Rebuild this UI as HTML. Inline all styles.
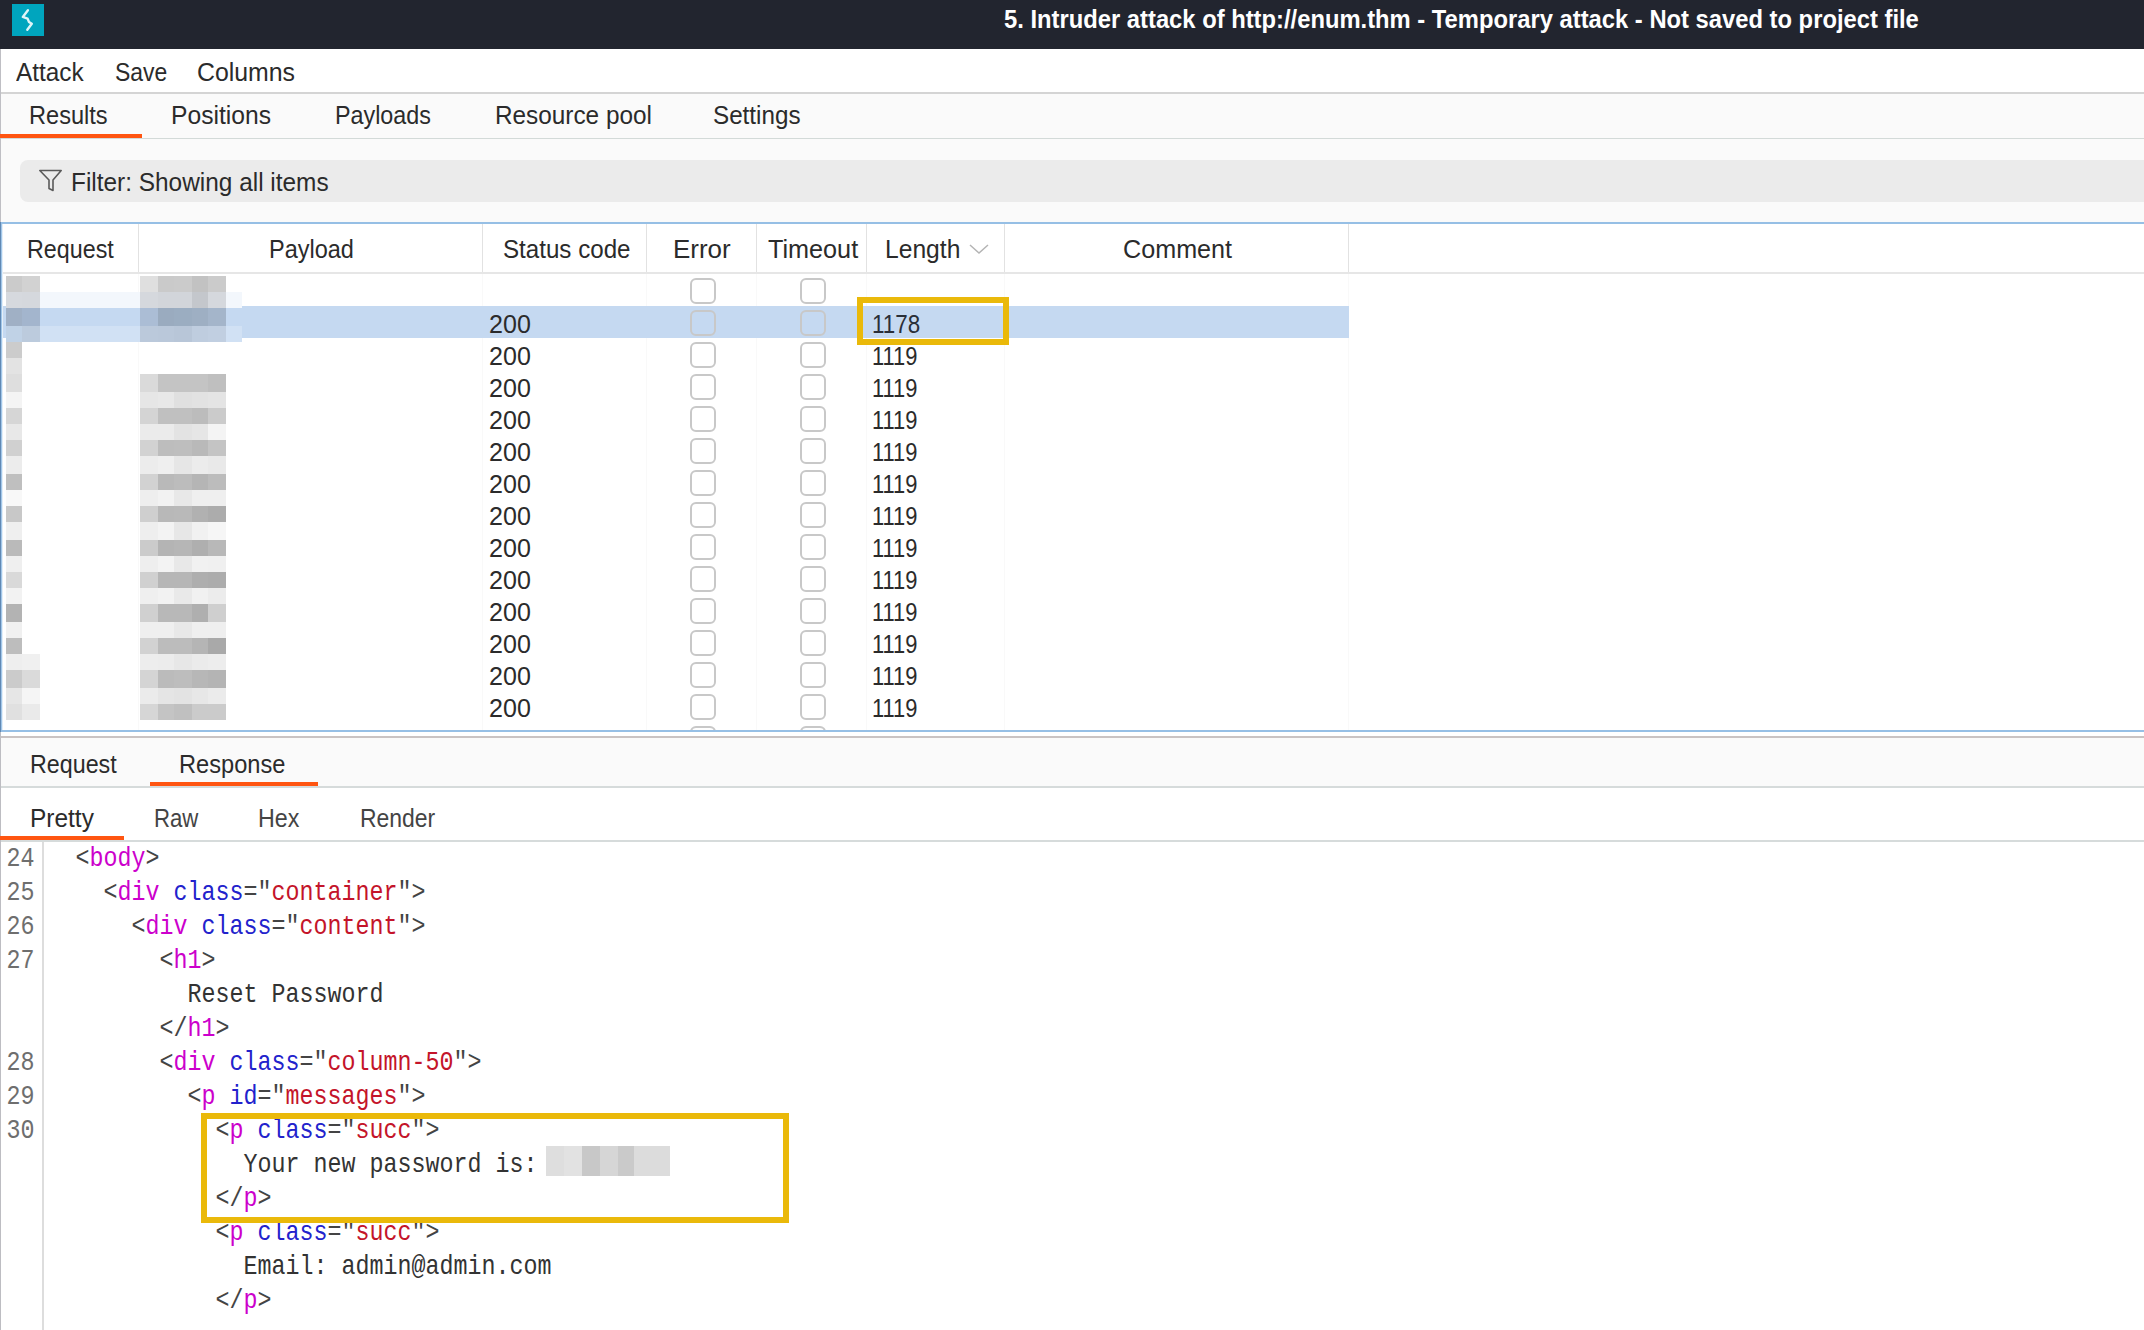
<!DOCTYPE html>
<html><head><meta charset="utf-8"><title>Burp Intruder</title><style>*{margin:0;padding:0;box-sizing:content-box}
html,body{width:2144px;height:1330px;overflow:hidden;background:#fff}
body>div,body>svg{position:absolute}
.t{position:absolute;white-space:pre;line-height:1;font-family:"Liberation Sans", sans-serif}
.m{position:absolute;white-space:pre;line-height:1;font-family:"Liberation Mono", monospace;font-size:23.33px}
</style></head><body>
<div style="left:0px;top:0px;width:2144px;height:49px;background:#22252f;"></div>
<div style="left:12px;top:4px;width:32px;height:32px;background:#00a5be;"></div>
<svg style="position:absolute;left:12px;top:4px" width="32" height="32" viewBox="0 0 32 32"><path d="M15.9 6.3 L10.8 12.9 L15.6 14.6 L17.0 18.0 L19.8 19.8 L15.3 25.8" stroke="#dff5f8" stroke-width="2.4" fill="none" stroke-linecap="round" stroke-linejoin="round"/></svg>
<div class="t" style="left:1003.9px;top:6.2px;font-size:26px;color:#ffffff;font-weight:bold;transform:scaleX(0.9142);transform-origin:0 22.0px">5. Intruder attack of http://enum.thm - Temporary attack - Not saved to project file</div>
<div style="left:0px;top:49px;width:1px;height:173px;background:#bfbfc4;"></div>
<div style="left:0px;top:732px;width:1px;height:598px;background:#bdbdc2;"></div>
<div style="left:1px;top:49px;width:2143px;height:43px;background:#ffffff;"></div>
<div class="t" style="left:16.4px;top:59.6px;font-size:25px;color:#2b2b2b;font-weight:normal;transform:scaleX(0.9741);transform-origin:0 21.2px">Attack</div>
<div class="t" style="left:114.9px;top:59.6px;font-size:25px;color:#2b2b2b;font-weight:normal;transform:scaleX(0.9169);transform-origin:0 21.2px">Save</div>
<div class="t" style="left:197.4px;top:59.6px;font-size:25px;color:#2b2b2b;font-weight:normal;transform:scaleX(0.9938);transform-origin:0 21.2px">Columns</div>
<div style="left:1px;top:92px;width:2143px;height:2px;background:#d4d4d4;"></div>
<div style="left:1px;top:94px;width:2143px;height:44px;background:#fafafa;"></div>
<div class="t" style="left:28.9px;top:102.9px;font-size:25px;color:#2b2b2b;font-weight:normal;transform:scaleX(0.9429);transform-origin:0 21.2px">Results</div>
<div class="t" style="left:171.4px;top:102.9px;font-size:25px;color:#2b2b2b;font-weight:normal;transform:scaleX(0.9858);transform-origin:0 21.2px">Positions</div>
<div class="t" style="left:335.3px;top:102.9px;font-size:25px;color:#2b2b2b;font-weight:normal;transform:scaleX(0.9330);transform-origin:0 21.2px">Payloads</div>
<div class="t" style="left:495.1px;top:102.9px;font-size:25px;color:#2b2b2b;font-weight:normal;transform:scaleX(0.9733);transform-origin:0 21.2px">Resource pool</div>
<div class="t" style="left:713.4px;top:102.9px;font-size:25px;color:#2b2b2b;font-weight:normal;transform:scaleX(0.9688);transform-origin:0 21.2px">Settings</div>
<div style="left:0px;top:134px;width:142px;height:4px;background:#ff5511;"></div>
<div style="left:1px;top:138px;width:2143px;height:1px;background:#d3dad8;"></div>
<div style="left:1px;top:139px;width:2143px;height:83px;background:#fafafa;"></div>
<div style="left:20px;top:160px;width:2200px;height:42px;background:#ebebeb;border-radius:8px"></div>
<svg style="position:absolute;left:38px;top:169px" width="26" height="24" viewBox="0 0 26 24"><path d="M1.8 1.5 H23.2 L15 11 V21.5 L11 19.5 V11 Z" stroke="#5a5a5a" stroke-width="1.6" fill="none" stroke-linejoin="round"/></svg>
<div class="t" style="left:71.3px;top:169.8px;font-size:25px;color:#2b2b2b;font-weight:normal;transform:scaleX(0.9759);transform-origin:0 21.2px">Filter: Showing all items</div>
<div style="left:1px;top:222px;width:2143px;height:510px;background:#ffffff;"></div>
<div style="left:1px;top:222px;width:2143px;height:2px;background:#96bfe5;"></div>
<div style="left:0px;top:222px;width:1px;height:510px;background:#6189b4;"></div>
<div style="left:1px;top:224px;width:1px;height:506px;background:#a0c6e9;"></div>
<div style="left:2px;top:224px;width:1px;height:506px;background:#e4eef8;"></div>
<div style="left:1px;top:730px;width:2143px;height:2px;background:#96bfe5;"></div>
<div style="left:3px;top:272px;width:2141px;height:2px;background:#e6e6e6;"></div>
<div style="left:138px;top:224px;width:1px;height:48px;background:#e2e2e2;"></div>
<div style="left:138px;top:274px;width:1px;height:456px;background:#f9f9f9;"></div>
<div style="left:482px;top:224px;width:1px;height:48px;background:#e2e2e2;"></div>
<div style="left:482px;top:274px;width:1px;height:456px;background:#f9f9f9;"></div>
<div style="left:646px;top:224px;width:1px;height:48px;background:#e2e2e2;"></div>
<div style="left:646px;top:274px;width:1px;height:456px;background:#f9f9f9;"></div>
<div style="left:756px;top:224px;width:1px;height:48px;background:#e2e2e2;"></div>
<div style="left:756px;top:274px;width:1px;height:456px;background:#f9f9f9;"></div>
<div style="left:866px;top:224px;width:1px;height:48px;background:#e2e2e2;"></div>
<div style="left:866px;top:274px;width:1px;height:456px;background:#f9f9f9;"></div>
<div style="left:1004px;top:224px;width:1px;height:48px;background:#e2e2e2;"></div>
<div style="left:1004px;top:274px;width:1px;height:456px;background:#f9f9f9;"></div>
<div style="left:1348px;top:224px;width:1px;height:48px;background:#e2e2e2;"></div>
<div style="left:1348px;top:274px;width:1px;height:456px;background:#f9f9f9;"></div>
<div style="left:3px;top:306px;width:1346px;height:32px;background:#c5d9f1;"></div>
<div class="t" style="left:27.3px;top:237.1px;font-size:25px;color:#2b2b2b;font-weight:normal;transform:scaleX(0.9319);transform-origin:0 21.2px">Request</div>
<div class="t" style="left:269.1px;top:237.1px;font-size:25px;color:#2b2b2b;font-weight:normal;transform:scaleX(0.9395);transform-origin:0 21.2px">Payload</div>
<div class="t" style="left:503.1px;top:237.1px;font-size:25px;color:#2b2b2b;font-weight:normal;transform:scaleX(0.9657);transform-origin:0 21.2px">Status code</div>
<div class="t" style="left:673.3px;top:237.1px;font-size:25px;color:#2b2b2b;font-weight:normal;transform:scaleX(1.0385);transform-origin:0 21.2px">Error</div>
<div class="t" style="left:768.0px;top:237.1px;font-size:25px;color:#2b2b2b;font-weight:normal;transform:scaleX(1.0085);transform-origin:0 21.2px">Timeout</div>
<div class="t" style="left:885.3px;top:237.1px;font-size:25px;color:#2b2b2b;font-weight:normal;transform:scaleX(0.9856);transform-origin:0 21.2px">Length</div>
<div class="t" style="left:1123.3px;top:237.1px;font-size:25px;color:#2b2b2b;font-weight:normal;transform:scaleX(1.0065);transform-origin:0 21.2px">Comment</div>
<svg style="position:absolute;left:968px;top:242px" width="22" height="14" viewBox="0 0 22 14"><path d="M2 3 L11 11 L20 3" stroke="#b4b4b4" stroke-width="1.5" fill="none"/></svg>
<div style="left:690px;top:278px;width:26px;height:26px;overflow:hidden"><div style="position:absolute;left:0;top:0;width:22px;height:22px;border:2px solid #c8c8c8;border-radius:6px"></div></div>
<div style="left:800px;top:278px;width:26px;height:26px;overflow:hidden"><div style="position:absolute;left:0;top:0;width:22px;height:22px;border:2px solid #c8c8c8;border-radius:6px"></div></div>
<div style="left:690px;top:310px;width:26px;height:26px;overflow:hidden"><div style="position:absolute;left:0;top:0;width:22px;height:22px;border:2px solid #c8c8c8;border-radius:6px"></div></div>
<div style="left:800px;top:310px;width:26px;height:26px;overflow:hidden"><div style="position:absolute;left:0;top:0;width:22px;height:22px;border:2px solid #c8c8c8;border-radius:6px"></div></div>
<div class="t" style="left:488.5px;top:311.6px;font-size:25px;color:#2b2b2b;font-weight:normal;transform:scaleX(1.0025);transform-origin:0 21.2px">200</div>
<div class="t" style="left:871.9px;top:311.6px;font-size:25px;color:#2a2f38;font-weight:normal;transform:scaleX(0.8966);transform-origin:0 21.2px">1178</div>
<div style="left:690px;top:342px;width:26px;height:26px;overflow:hidden"><div style="position:absolute;left:0;top:0;width:22px;height:22px;border:2px solid #c8c8c8;border-radius:6px"></div></div>
<div style="left:800px;top:342px;width:26px;height:26px;overflow:hidden"><div style="position:absolute;left:0;top:0;width:22px;height:22px;border:2px solid #c8c8c8;border-radius:6px"></div></div>
<div class="t" style="left:488.5px;top:343.6px;font-size:25px;color:#2b2b2b;font-weight:normal;transform:scaleX(1.0025);transform-origin:0 21.2px">200</div>
<div class="t" style="left:872.2px;top:343.6px;font-size:25px;color:#2b2b2b;font-weight:normal;transform:scaleX(0.8759);transform-origin:0 21.2px">1119</div>
<div style="left:690px;top:374px;width:26px;height:26px;overflow:hidden"><div style="position:absolute;left:0;top:0;width:22px;height:22px;border:2px solid #c8c8c8;border-radius:6px"></div></div>
<div style="left:800px;top:374px;width:26px;height:26px;overflow:hidden"><div style="position:absolute;left:0;top:0;width:22px;height:22px;border:2px solid #c8c8c8;border-radius:6px"></div></div>
<div class="t" style="left:488.5px;top:375.6px;font-size:25px;color:#2b2b2b;font-weight:normal;transform:scaleX(1.0025);transform-origin:0 21.2px">200</div>
<div class="t" style="left:872.2px;top:375.6px;font-size:25px;color:#2b2b2b;font-weight:normal;transform:scaleX(0.8759);transform-origin:0 21.2px">1119</div>
<div style="left:690px;top:406px;width:26px;height:26px;overflow:hidden"><div style="position:absolute;left:0;top:0;width:22px;height:22px;border:2px solid #c8c8c8;border-radius:6px"></div></div>
<div style="left:800px;top:406px;width:26px;height:26px;overflow:hidden"><div style="position:absolute;left:0;top:0;width:22px;height:22px;border:2px solid #c8c8c8;border-radius:6px"></div></div>
<div class="t" style="left:488.5px;top:407.6px;font-size:25px;color:#2b2b2b;font-weight:normal;transform:scaleX(1.0025);transform-origin:0 21.2px">200</div>
<div class="t" style="left:872.2px;top:407.6px;font-size:25px;color:#2b2b2b;font-weight:normal;transform:scaleX(0.8759);transform-origin:0 21.2px">1119</div>
<div style="left:690px;top:438px;width:26px;height:26px;overflow:hidden"><div style="position:absolute;left:0;top:0;width:22px;height:22px;border:2px solid #c8c8c8;border-radius:6px"></div></div>
<div style="left:800px;top:438px;width:26px;height:26px;overflow:hidden"><div style="position:absolute;left:0;top:0;width:22px;height:22px;border:2px solid #c8c8c8;border-radius:6px"></div></div>
<div class="t" style="left:488.5px;top:439.6px;font-size:25px;color:#2b2b2b;font-weight:normal;transform:scaleX(1.0025);transform-origin:0 21.2px">200</div>
<div class="t" style="left:872.2px;top:439.6px;font-size:25px;color:#2b2b2b;font-weight:normal;transform:scaleX(0.8759);transform-origin:0 21.2px">1119</div>
<div style="left:690px;top:470px;width:26px;height:26px;overflow:hidden"><div style="position:absolute;left:0;top:0;width:22px;height:22px;border:2px solid #c8c8c8;border-radius:6px"></div></div>
<div style="left:800px;top:470px;width:26px;height:26px;overflow:hidden"><div style="position:absolute;left:0;top:0;width:22px;height:22px;border:2px solid #c8c8c8;border-radius:6px"></div></div>
<div class="t" style="left:488.5px;top:471.6px;font-size:25px;color:#2b2b2b;font-weight:normal;transform:scaleX(1.0025);transform-origin:0 21.2px">200</div>
<div class="t" style="left:872.2px;top:471.6px;font-size:25px;color:#2b2b2b;font-weight:normal;transform:scaleX(0.8759);transform-origin:0 21.2px">1119</div>
<div style="left:690px;top:502px;width:26px;height:26px;overflow:hidden"><div style="position:absolute;left:0;top:0;width:22px;height:22px;border:2px solid #c8c8c8;border-radius:6px"></div></div>
<div style="left:800px;top:502px;width:26px;height:26px;overflow:hidden"><div style="position:absolute;left:0;top:0;width:22px;height:22px;border:2px solid #c8c8c8;border-radius:6px"></div></div>
<div class="t" style="left:488.5px;top:503.6px;font-size:25px;color:#2b2b2b;font-weight:normal;transform:scaleX(1.0025);transform-origin:0 21.2px">200</div>
<div class="t" style="left:872.2px;top:503.6px;font-size:25px;color:#2b2b2b;font-weight:normal;transform:scaleX(0.8759);transform-origin:0 21.2px">1119</div>
<div style="left:690px;top:534px;width:26px;height:26px;overflow:hidden"><div style="position:absolute;left:0;top:0;width:22px;height:22px;border:2px solid #c8c8c8;border-radius:6px"></div></div>
<div style="left:800px;top:534px;width:26px;height:26px;overflow:hidden"><div style="position:absolute;left:0;top:0;width:22px;height:22px;border:2px solid #c8c8c8;border-radius:6px"></div></div>
<div class="t" style="left:488.5px;top:535.6px;font-size:25px;color:#2b2b2b;font-weight:normal;transform:scaleX(1.0025);transform-origin:0 21.2px">200</div>
<div class="t" style="left:872.2px;top:535.6px;font-size:25px;color:#2b2b2b;font-weight:normal;transform:scaleX(0.8759);transform-origin:0 21.2px">1119</div>
<div style="left:690px;top:566px;width:26px;height:26px;overflow:hidden"><div style="position:absolute;left:0;top:0;width:22px;height:22px;border:2px solid #c8c8c8;border-radius:6px"></div></div>
<div style="left:800px;top:566px;width:26px;height:26px;overflow:hidden"><div style="position:absolute;left:0;top:0;width:22px;height:22px;border:2px solid #c8c8c8;border-radius:6px"></div></div>
<div class="t" style="left:488.5px;top:567.6px;font-size:25px;color:#2b2b2b;font-weight:normal;transform:scaleX(1.0025);transform-origin:0 21.2px">200</div>
<div class="t" style="left:872.2px;top:567.6px;font-size:25px;color:#2b2b2b;font-weight:normal;transform:scaleX(0.8759);transform-origin:0 21.2px">1119</div>
<div style="left:690px;top:598px;width:26px;height:26px;overflow:hidden"><div style="position:absolute;left:0;top:0;width:22px;height:22px;border:2px solid #c8c8c8;border-radius:6px"></div></div>
<div style="left:800px;top:598px;width:26px;height:26px;overflow:hidden"><div style="position:absolute;left:0;top:0;width:22px;height:22px;border:2px solid #c8c8c8;border-radius:6px"></div></div>
<div class="t" style="left:488.5px;top:599.6px;font-size:25px;color:#2b2b2b;font-weight:normal;transform:scaleX(1.0025);transform-origin:0 21.2px">200</div>
<div class="t" style="left:872.2px;top:599.6px;font-size:25px;color:#2b2b2b;font-weight:normal;transform:scaleX(0.8759);transform-origin:0 21.2px">1119</div>
<div style="left:690px;top:630px;width:26px;height:26px;overflow:hidden"><div style="position:absolute;left:0;top:0;width:22px;height:22px;border:2px solid #c8c8c8;border-radius:6px"></div></div>
<div style="left:800px;top:630px;width:26px;height:26px;overflow:hidden"><div style="position:absolute;left:0;top:0;width:22px;height:22px;border:2px solid #c8c8c8;border-radius:6px"></div></div>
<div class="t" style="left:488.5px;top:631.6px;font-size:25px;color:#2b2b2b;font-weight:normal;transform:scaleX(1.0025);transform-origin:0 21.2px">200</div>
<div class="t" style="left:872.2px;top:631.6px;font-size:25px;color:#2b2b2b;font-weight:normal;transform:scaleX(0.8759);transform-origin:0 21.2px">1119</div>
<div style="left:690px;top:662px;width:26px;height:26px;overflow:hidden"><div style="position:absolute;left:0;top:0;width:22px;height:22px;border:2px solid #c8c8c8;border-radius:6px"></div></div>
<div style="left:800px;top:662px;width:26px;height:26px;overflow:hidden"><div style="position:absolute;left:0;top:0;width:22px;height:22px;border:2px solid #c8c8c8;border-radius:6px"></div></div>
<div class="t" style="left:488.5px;top:663.6px;font-size:25px;color:#2b2b2b;font-weight:normal;transform:scaleX(1.0025);transform-origin:0 21.2px">200</div>
<div class="t" style="left:872.2px;top:663.6px;font-size:25px;color:#2b2b2b;font-weight:normal;transform:scaleX(0.8759);transform-origin:0 21.2px">1119</div>
<div style="left:690px;top:694px;width:26px;height:26px;overflow:hidden"><div style="position:absolute;left:0;top:0;width:22px;height:22px;border:2px solid #c8c8c8;border-radius:6px"></div></div>
<div style="left:800px;top:694px;width:26px;height:26px;overflow:hidden"><div style="position:absolute;left:0;top:0;width:22px;height:22px;border:2px solid #c8c8c8;border-radius:6px"></div></div>
<div class="t" style="left:488.5px;top:695.6px;font-size:25px;color:#2b2b2b;font-weight:normal;transform:scaleX(1.0025);transform-origin:0 21.2px">200</div>
<div class="t" style="left:872.2px;top:695.6px;font-size:25px;color:#2b2b2b;font-weight:normal;transform:scaleX(0.8759);transform-origin:0 21.2px">1119</div>
<div style="left:690px;top:726px;width:26px;height:4px;overflow:hidden"><div style="position:absolute;left:0;top:0;width:22px;height:22px;border:2px solid #c8c8c8;border-radius:6px"></div></div>
<div style="left:800px;top:726px;width:26px;height:4px;overflow:hidden"><div style="position:absolute;left:0;top:0;width:22px;height:22px;border:2px solid #c8c8c8;border-radius:6px"></div></div>
<div style="left:6px;top:276px;width:16px;height:16px;background:#cbcbcb;"></div>
<div style="left:22px;top:276px;width:18px;height:16px;background:#d2d2d2;"></div>
<div style="left:140px;top:276px;width:18px;height:16px;background:#dfdfdf;"></div>
<div style="left:158px;top:276px;width:16px;height:16px;background:#cacaca;"></div>
<div style="left:174px;top:276px;width:18px;height:16px;background:#cbcbcb;"></div>
<div style="left:192px;top:276px;width:16px;height:16px;background:#c2c2c2;"></div>
<div style="left:208px;top:276px;width:18px;height:16px;background:#cbcbcb;"></div>
<div style="left:6px;top:292px;width:16px;height:16px;background:#d6d9de;"></div>
<div style="left:22px;top:292px;width:18px;height:16px;background:#d5d8dd;"></div>
<div style="left:40px;top:292px;width:100px;height:16px;background:#f3f7fc;"></div>
<div style="left:140px;top:292px;width:18px;height:16px;background:#d5d8dd;"></div>
<div style="left:158px;top:292px;width:16px;height:16px;background:#d2d5da;"></div>
<div style="left:174px;top:292px;width:18px;height:16px;background:#d2d5da;"></div>
<div style="left:192px;top:292px;width:16px;height:16px;background:#c4c7cc;"></div>
<div style="left:208px;top:292px;width:18px;height:16px;background:#d5d8dd;"></div>
<div style="left:226px;top:292px;width:16px;height:16px;background:#f3f7fc;"></div>
<div style="left:6px;top:308px;width:16px;height:18px;background:#a0b0c5;"></div>
<div style="left:22px;top:308px;width:18px;height:18px;background:#a3b5cd;"></div>
<div style="left:40px;top:308px;width:100px;height:18px;background:#c5d9f1;"></div>
<div style="left:140px;top:308px;width:18px;height:18px;background:#abbdd5;"></div>
<div style="left:158px;top:308px;width:16px;height:18px;background:#9aabbf;"></div>
<div style="left:174px;top:308px;width:18px;height:18px;background:#9badc1;"></div>
<div style="left:192px;top:308px;width:16px;height:18px;background:#9eafc3;"></div>
<div style="left:208px;top:308px;width:18px;height:18px;background:#a4b5ca;"></div>
<div style="left:226px;top:308px;width:16px;height:18px;background:#c5d9f1;"></div>
<div style="left:6px;top:326px;width:16px;height:16px;background:#c0d2e6;"></div>
<div style="left:22px;top:326px;width:18px;height:16px;background:#bccbdd;"></div>
<div style="left:40px;top:326px;width:100px;height:16px;background:#d1e1f4;"></div>
<div style="left:140px;top:326px;width:18px;height:16px;background:#bbc9db;"></div>
<div style="left:158px;top:326px;width:16px;height:16px;background:#bac8da;"></div>
<div style="left:174px;top:326px;width:18px;height:16px;background:#b8c6d8;"></div>
<div style="left:192px;top:326px;width:16px;height:16px;background:#bfcddf;"></div>
<div style="left:208px;top:326px;width:18px;height:16px;background:#c1cfe1;"></div>
<div style="left:226px;top:326px;width:16px;height:16px;background:#d1e1f4;"></div>
<div style="left:6px;top:342px;width:16px;height:16px;background:#cccccc;"></div>
<div style="left:6px;top:358px;width:16px;height:16px;background:#e3e3e3;"></div>
<div style="left:6px;top:374px;width:16px;height:18px;background:#dedede;"></div>
<div style="left:140px;top:374px;width:18px;height:18px;background:#dadada;"></div>
<div style="left:158px;top:374px;width:16px;height:18px;background:#c4c4c4;"></div>
<div style="left:174px;top:374px;width:18px;height:18px;background:#c4c4c4;"></div>
<div style="left:192px;top:374px;width:16px;height:18px;background:#c4c4c4;"></div>
<div style="left:208px;top:374px;width:18px;height:18px;background:#bfbfbf;"></div>
<div style="left:6px;top:392px;width:16px;height:16px;background:#f4f4f4;"></div>
<div style="left:140px;top:392px;width:18px;height:16px;background:#e6e6e6;"></div>
<div style="left:158px;top:392px;width:16px;height:16px;background:#e8e8e8;"></div>
<div style="left:174px;top:392px;width:18px;height:16px;background:#e0e0e0;"></div>
<div style="left:192px;top:392px;width:16px;height:16px;background:#e2e2e2;"></div>
<div style="left:208px;top:392px;width:18px;height:16px;background:#e4e4e4;"></div>
<div style="left:6px;top:408px;width:16px;height:16px;background:#d6d6d6;"></div>
<div style="left:140px;top:408px;width:18px;height:16px;background:#d4d4d4;"></div>
<div style="left:158px;top:408px;width:16px;height:16px;background:#c0c0c0;"></div>
<div style="left:174px;top:408px;width:18px;height:16px;background:#c0c0c0;"></div>
<div style="left:192px;top:408px;width:16px;height:16px;background:#bcbcbc;"></div>
<div style="left:208px;top:408px;width:18px;height:16px;background:#cbcbcb;"></div>
<div style="left:6px;top:424px;width:16px;height:16px;background:#e8e8e8;"></div>
<div style="left:140px;top:424px;width:18px;height:16px;background:#ebebeb;"></div>
<div style="left:158px;top:424px;width:16px;height:16px;background:#ebebeb;"></div>
<div style="left:174px;top:424px;width:18px;height:16px;background:#e3e3e3;"></div>
<div style="left:192px;top:424px;width:16px;height:16px;background:#e6e6e6;"></div>
<div style="left:208px;top:424px;width:18px;height:16px;background:#f4f4f4;"></div>
<div style="left:6px;top:440px;width:16px;height:16px;background:#d0d0d0;"></div>
<div style="left:140px;top:440px;width:18px;height:16px;background:#d2d2d2;"></div>
<div style="left:158px;top:440px;width:16px;height:16px;background:#bdbdbd;"></div>
<div style="left:174px;top:440px;width:18px;height:16px;background:#bebebe;"></div>
<div style="left:192px;top:440px;width:16px;height:16px;background:#b9b9b9;"></div>
<div style="left:208px;top:440px;width:18px;height:16px;background:#c4c4c4;"></div>
<div style="left:6px;top:456px;width:16px;height:18px;background:#ececec;"></div>
<div style="left:140px;top:456px;width:18px;height:18px;background:#ececec;"></div>
<div style="left:158px;top:456px;width:16px;height:18px;background:#efefef;"></div>
<div style="left:174px;top:456px;width:18px;height:18px;background:#e6e6e6;"></div>
<div style="left:192px;top:456px;width:16px;height:18px;background:#ececec;"></div>
<div style="left:208px;top:456px;width:18px;height:18px;background:#e9e9e9;"></div>
<div style="left:6px;top:474px;width:16px;height:16px;background:#bfbfbf;"></div>
<div style="left:140px;top:474px;width:18px;height:16px;background:#d2d2d2;"></div>
<div style="left:158px;top:474px;width:16px;height:16px;background:#b9b9b9;"></div>
<div style="left:174px;top:474px;width:18px;height:16px;background:#bcbcbc;"></div>
<div style="left:192px;top:474px;width:16px;height:16px;background:#b5b5b5;"></div>
<div style="left:208px;top:474px;width:18px;height:16px;background:#bcbcbc;"></div>
<div style="left:6px;top:490px;width:16px;height:16px;background:#f8f8f8;"></div>
<div style="left:140px;top:490px;width:18px;height:16px;background:#eeeeee;"></div>
<div style="left:158px;top:490px;width:16px;height:16px;background:#f2f2f2;"></div>
<div style="left:174px;top:490px;width:18px;height:16px;background:#e8e8e8;"></div>
<div style="left:192px;top:490px;width:16px;height:16px;background:#efefef;"></div>
<div style="left:208px;top:490px;width:18px;height:16px;background:#efefef;"></div>
<div style="left:6px;top:506px;width:16px;height:16px;background:#c8c8c8;"></div>
<div style="left:140px;top:506px;width:18px;height:16px;background:#cfcfcf;"></div>
<div style="left:158px;top:506px;width:16px;height:16px;background:#b8b8b8;"></div>
<div style="left:174px;top:506px;width:18px;height:16px;background:#b9b9b9;"></div>
<div style="left:192px;top:506px;width:16px;height:16px;background:#b1b1b1;"></div>
<div style="left:208px;top:506px;width:18px;height:16px;background:#acacac;"></div>
<div style="left:6px;top:522px;width:16px;height:18px;background:#efefef;"></div>
<div style="left:140px;top:522px;width:18px;height:18px;background:#eeeeee;"></div>
<div style="left:158px;top:522px;width:16px;height:18px;background:#f3f3f3;"></div>
<div style="left:174px;top:522px;width:18px;height:18px;background:#e7e7e7;"></div>
<div style="left:192px;top:522px;width:16px;height:18px;background:#f1f1f1;"></div>
<div style="left:208px;top:522px;width:18px;height:18px;background:#f6f6f6;"></div>
<div style="left:6px;top:540px;width:16px;height:16px;background:#bababa;"></div>
<div style="left:140px;top:540px;width:18px;height:16px;background:#cbcbcb;"></div>
<div style="left:158px;top:540px;width:16px;height:16px;background:#b4b4b4;"></div>
<div style="left:174px;top:540px;width:18px;height:16px;background:#b6b6b6;"></div>
<div style="left:192px;top:540px;width:16px;height:16px;background:#afafaf;"></div>
<div style="left:208px;top:540px;width:18px;height:16px;background:#b8b8b8;"></div>
<div style="left:6px;top:556px;width:16px;height:16px;background:#efefef;"></div>
<div style="left:140px;top:556px;width:18px;height:16px;background:#eeeeee;"></div>
<div style="left:158px;top:556px;width:16px;height:16px;background:#f3f3f3;"></div>
<div style="left:174px;top:556px;width:18px;height:16px;background:#e8e8e8;"></div>
<div style="left:192px;top:556px;width:16px;height:16px;background:#f1f1f1;"></div>
<div style="left:208px;top:556px;width:18px;height:16px;background:#f0f0f0;"></div>
<div style="left:6px;top:572px;width:16px;height:16px;background:#d9d9d9;"></div>
<div style="left:140px;top:572px;width:18px;height:16px;background:#d0d0d0;"></div>
<div style="left:158px;top:572px;width:16px;height:16px;background:#b6b6b6;"></div>
<div style="left:174px;top:572px;width:18px;height:16px;background:#b6b6b6;"></div>
<div style="left:192px;top:572px;width:16px;height:16px;background:#aeaeae;"></div>
<div style="left:208px;top:572px;width:18px;height:16px;background:#acacac;"></div>
<div style="left:6px;top:588px;width:16px;height:16px;background:#f2f2f2;"></div>
<div style="left:140px;top:588px;width:18px;height:16px;background:#efefef;"></div>
<div style="left:158px;top:588px;width:16px;height:16px;background:#f2f2f2;"></div>
<div style="left:174px;top:588px;width:18px;height:16px;background:#e9e9e9;"></div>
<div style="left:192px;top:588px;width:16px;height:16px;background:#f1f1f1;"></div>
<div style="left:208px;top:588px;width:18px;height:16px;background:#ececec;"></div>
<div style="left:6px;top:604px;width:16px;height:18px;background:#b3b3b3;"></div>
<div style="left:140px;top:604px;width:18px;height:18px;background:#d0d0d0;"></div>
<div style="left:158px;top:604px;width:16px;height:18px;background:#b8b8b8;"></div>
<div style="left:174px;top:604px;width:18px;height:18px;background:#b8b8b8;"></div>
<div style="left:192px;top:604px;width:16px;height:18px;background:#afafaf;"></div>
<div style="left:208px;top:604px;width:18px;height:18px;background:#cfcfcf;"></div>
<div style="left:6px;top:622px;width:16px;height:16px;background:#f0f0f0;"></div>
<div style="left:140px;top:622px;width:18px;height:16px;background:#efefef;"></div>
<div style="left:158px;top:622px;width:16px;height:16px;background:#efefef;"></div>
<div style="left:174px;top:622px;width:18px;height:16px;background:#e8e8e8;"></div>
<div style="left:192px;top:622px;width:16px;height:16px;background:#efefef;"></div>
<div style="left:208px;top:622px;width:18px;height:16px;background:#efefef;"></div>
<div style="left:6px;top:638px;width:16px;height:16px;background:#bdbdbd;"></div>
<div style="left:140px;top:638px;width:18px;height:16px;background:#d2d2d2;"></div>
<div style="left:158px;top:638px;width:16px;height:16px;background:#bcbcbc;"></div>
<div style="left:174px;top:638px;width:18px;height:16px;background:#bcbcbc;"></div>
<div style="left:192px;top:638px;width:16px;height:16px;background:#b5b5b5;"></div>
<div style="left:208px;top:638px;width:18px;height:16px;background:#a9a9a9;"></div>
<div style="left:6px;top:654px;width:16px;height:16px;background:#eeeeee;"></div>
<div style="left:22px;top:654px;width:18px;height:16px;background:#f0f0f0;"></div>
<div style="left:140px;top:654px;width:18px;height:16px;background:#ededed;"></div>
<div style="left:158px;top:654px;width:16px;height:16px;background:#ececec;"></div>
<div style="left:174px;top:654px;width:18px;height:16px;background:#e7e7e7;"></div>
<div style="left:192px;top:654px;width:16px;height:16px;background:#ebebeb;"></div>
<div style="left:208px;top:654px;width:18px;height:16px;background:#ededed;"></div>
<div style="left:6px;top:670px;width:16px;height:18px;background:#cbcbcb;"></div>
<div style="left:22px;top:670px;width:18px;height:18px;background:#dadada;"></div>
<div style="left:140px;top:670px;width:18px;height:18px;background:#d4d4d4;"></div>
<div style="left:158px;top:670px;width:16px;height:18px;background:#bbbbbb;"></div>
<div style="left:174px;top:670px;width:18px;height:18px;background:#bdbdbd;"></div>
<div style="left:192px;top:670px;width:16px;height:18px;background:#b7b7b7;"></div>
<div style="left:208px;top:670px;width:18px;height:18px;background:#b4b4b4;"></div>
<div style="left:6px;top:688px;width:16px;height:16px;background:#e6e6e6;"></div>
<div style="left:22px;top:688px;width:18px;height:16px;background:#f5f5f5;"></div>
<div style="left:140px;top:688px;width:18px;height:16px;background:#ebebeb;"></div>
<div style="left:158px;top:688px;width:16px;height:16px;background:#e5e5e5;"></div>
<div style="left:174px;top:688px;width:18px;height:16px;background:#e3e3e3;"></div>
<div style="left:192px;top:688px;width:16px;height:16px;background:#e7e7e7;"></div>
<div style="left:208px;top:688px;width:18px;height:16px;background:#ebebeb;"></div>
<div style="left:6px;top:704px;width:16px;height:16px;background:#e0e0e0;"></div>
<div style="left:22px;top:704px;width:18px;height:16px;background:#eaeaea;"></div>
<div style="left:140px;top:704px;width:18px;height:16px;background:#d6d6d6;"></div>
<div style="left:158px;top:704px;width:16px;height:16px;background:#c4c4c4;"></div>
<div style="left:174px;top:704px;width:18px;height:16px;background:#c0c0c0;"></div>
<div style="left:192px;top:704px;width:16px;height:16px;background:#cbcbcb;"></div>
<div style="left:208px;top:704px;width:18px;height:16px;background:#cbcbcb;"></div>
<div style="left:857px;top:297px;width:140px;height:36px;border:6px solid #eab90a"></div>
<div style="left:1px;top:732px;width:2143px;height:4px;background:#ffffff;"></div>
<div style="left:1px;top:736px;width:2143px;height:2px;background:#c9c3c3;"></div>
<div style="left:1px;top:738px;width:2143px;height:48px;background:#fafafa;"></div>
<div class="t" style="left:29.6px;top:751.8px;font-size:25px;color:#2b2b2b;font-weight:normal;transform:scaleX(0.9308);transform-origin:0 21.2px">Request</div>
<div class="t" style="left:179.1px;top:751.8px;font-size:25px;color:#2b2b2b;font-weight:normal;transform:scaleX(0.9452);transform-origin:0 21.2px">Response</div>
<div style="left:150px;top:782px;width:168px;height:4px;background:#ff5511;"></div>
<div style="left:1px;top:786px;width:2143px;height:2px;background:#d6dbdb;"></div>
<div style="left:1px;top:788px;width:2143px;height:52px;background:#ffffff;"></div>
<div class="t" style="left:29.5px;top:805.6px;font-size:25px;color:#2b2b2b;font-weight:normal;transform:scaleX(0.9787);transform-origin:0 21.2px">Pretty</div>
<div class="t" style="left:153.6px;top:805.6px;font-size:25px;color:#444;font-weight:normal;transform:scaleX(0.8875);transform-origin:0 21.2px">Raw</div>
<div class="t" style="left:257.7px;top:805.6px;font-size:25px;color:#444;font-weight:normal;transform:scaleX(0.9310);transform-origin:0 21.2px">Hex</div>
<div class="t" style="left:359.5px;top:805.6px;font-size:25px;color:#444;font-weight:normal;transform:scaleX(0.9179);transform-origin:0 21.2px">Render</div>
<div style="left:0px;top:836px;width:124px;height:4px;background:#ff5511;"></div>
<div style="left:1px;top:840px;width:2143px;height:2px;background:#d6dbdb;"></div>
<div style="left:1px;top:842px;width:2143px;height:488px;background:#ffffff;"></div>
<div style="left:42px;top:842px;width:2px;height:488px;background:#dddddd;"></div>
<div class="m" style="left:75.5px;top:848.9px;transform:scaleY(1.16);transform-origin:0 17.9px"><span style="color:#444444">&lt;</span><span style="color:#cc00cc">body</span><span style="color:#444444">&gt;</span></div>
<div class="m" style="left:103.5px;top:882.9px;transform:scaleY(1.16);transform-origin:0 17.9px"><span style="color:#444444">&lt;</span><span style="color:#cc00cc">div</span><span style="color:#444444"> </span><span style="color:#2222cc">class</span><span style="color:#444444">=&quot;</span><span style="color:#c4142a">container</span><span style="color:#444444">&quot;</span><span style="color:#444444">&gt;</span></div>
<div class="m" style="left:131.5px;top:916.9px;transform:scaleY(1.16);transform-origin:0 17.9px"><span style="color:#444444">&lt;</span><span style="color:#cc00cc">div</span><span style="color:#444444"> </span><span style="color:#2222cc">class</span><span style="color:#444444">=&quot;</span><span style="color:#c4142a">content</span><span style="color:#444444">&quot;</span><span style="color:#444444">&gt;</span></div>
<div class="m" style="left:159.5px;top:950.9px;transform:scaleY(1.16);transform-origin:0 17.9px"><span style="color:#444444">&lt;</span><span style="color:#cc00cc">h1</span><span style="color:#444444">&gt;</span></div>
<div class="m" style="left:187.5px;top:984.9px;transform:scaleY(1.16);transform-origin:0 17.9px"><span style="color:#333333">Reset Password</span></div>
<div class="m" style="left:159.5px;top:1018.9px;transform:scaleY(1.16);transform-origin:0 17.9px"><span style="color:#444444">&lt;/</span><span style="color:#cc00cc">h1</span><span style="color:#444444">&gt;</span></div>
<div class="m" style="left:159.5px;top:1052.9px;transform:scaleY(1.16);transform-origin:0 17.9px"><span style="color:#444444">&lt;</span><span style="color:#cc00cc">div</span><span style="color:#444444"> </span><span style="color:#2222cc">class</span><span style="color:#444444">=&quot;</span><span style="color:#c4142a">column-50</span><span style="color:#444444">&quot;</span><span style="color:#444444">&gt;</span></div>
<div class="m" style="left:187.5px;top:1086.9px;transform:scaleY(1.16);transform-origin:0 17.9px"><span style="color:#444444">&lt;</span><span style="color:#cc00cc">p</span><span style="color:#444444"> </span><span style="color:#2222cc">id</span><span style="color:#444444">=&quot;</span><span style="color:#c4142a">messages</span><span style="color:#444444">&quot;</span><span style="color:#444444">&gt;</span></div>
<div class="m" style="left:215.5px;top:1120.9px;transform:scaleY(1.16);transform-origin:0 17.9px"><span style="color:#444444">&lt;</span><span style="color:#cc00cc">p</span><span style="color:#444444"> </span><span style="color:#2222cc">class</span><span style="color:#444444">=&quot;</span><span style="color:#c4142a">succ</span><span style="color:#444444">&quot;</span><span style="color:#444444">&gt;</span></div>
<div class="m" style="left:243.5px;top:1154.9px;transform:scaleY(1.16);transform-origin:0 17.9px"><span style="color:#333333">Your new password is:</span></div>
<div class="m" style="left:215.5px;top:1188.9px;transform:scaleY(1.16);transform-origin:0 17.9px"><span style="color:#444444">&lt;/</span><span style="color:#cc00cc">p</span><span style="color:#444444">&gt;</span></div>
<div class="m" style="left:215.5px;top:1222.9px;transform:scaleY(1.16);transform-origin:0 17.9px"><span style="color:#444444">&lt;</span><span style="color:#cc00cc">p</span><span style="color:#444444"> </span><span style="color:#2222cc">class</span><span style="color:#444444">=&quot;</span><span style="color:#c4142a">succ</span><span style="color:#444444">&quot;</span><span style="color:#444444">&gt;</span></div>
<div class="m" style="left:243.5px;top:1256.9px;transform:scaleY(1.16);transform-origin:0 17.9px"><span style="color:#333333">Email: admin@admin.com</span></div>
<div class="m" style="left:215.5px;top:1290.9px;transform:scaleY(1.16);transform-origin:0 17.9px"><span style="color:#444444">&lt;/</span><span style="color:#cc00cc">p</span><span style="color:#444444">&gt;</span></div>
<div class="m" style="left:6.5px;top:848.9px;color:#6e6e6e;transform:scaleY(1.16);transform-origin:0 17.9px">24</div>
<div class="m" style="left:6.5px;top:882.9px;color:#6e6e6e;transform:scaleY(1.16);transform-origin:0 17.9px">25</div>
<div class="m" style="left:6.5px;top:916.9px;color:#6e6e6e;transform:scaleY(1.16);transform-origin:0 17.9px">26</div>
<div class="m" style="left:6.5px;top:950.9px;color:#6e6e6e;transform:scaleY(1.16);transform-origin:0 17.9px">27</div>
<div class="m" style="left:6.5px;top:1052.9px;color:#6e6e6e;transform:scaleY(1.16);transform-origin:0 17.9px">28</div>
<div class="m" style="left:6.5px;top:1086.9px;color:#6e6e6e;transform:scaleY(1.16);transform-origin:0 17.9px">29</div>
<div class="m" style="left:6.5px;top:1120.9px;color:#6e6e6e;transform:scaleY(1.16);transform-origin:0 17.9px">30</div>
<div style="left:546px;top:1146px;width:18px;height:30px;background:#dedede;"></div>
<div style="left:564px;top:1146px;width:18px;height:30px;background:#e2e2e2;"></div>
<div style="left:582px;top:1146px;width:18px;height:30px;background:#c8c8c8;"></div>
<div style="left:600px;top:1146px;width:18px;height:30px;background:#d6d6d6;"></div>
<div style="left:618px;top:1146px;width:16px;height:30px;background:#cacaca;"></div>
<div style="left:634px;top:1146px;width:36px;height:30px;background:#dcdcdc;"></div>
<div style="left:201px;top:1113px;width:576px;height:98px;border:6px solid #eab90a"></div>
</body></html>
